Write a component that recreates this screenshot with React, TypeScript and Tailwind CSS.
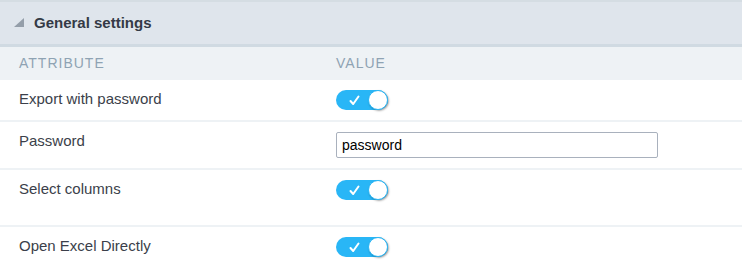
const rows = [
  { id: 1, label: 'Export with password', kind: 'toggle', h: 'h-[40px]' },
  { id: 2, label: 'Password', kind: 'input', h: 'h-[46px]' },
  { id: 3, label: 'Select columns', kind: 'toggle', h: 'h-[55px]' },
  { id: 4, label: 'Open Excel Directly', kind: 'toggle', h: 'h-[38px]' },
]

function Toggle() {
  return (
    <div className="relative w-[52px] h-[20px] rounded-full bg-[#29b6f6]">
      <svg className="absolute left-[13px] top-[5px]" width="11" height="11" viewBox="0 0 11 11">
        <path d="M1.5 6 L4.2 9 L9.5 1.5" fill="none" stroke="white" strokeWidth="2" strokeLinecap="round" strokeLinejoin="round" />
      </svg>
      <div className="absolute right-0 top-0 w-[20px] h-[20px] rounded-full bg-white border border-[#29b6f6] shadow-[1px_1px_2px_rgba(0,0,0,0.35)]" />
    </div>
  )
}

export default function App() {
  return (
    <div className="w-[742px] h-[265px] overflow-hidden bg-white font-['Liberation_Sans',Arial,sans-serif]">
      <div className="h-[47px] bg-[#dfe5ec] border-t-2 border-[#d5dde3] border-b-[3px] border-b-[#d0dae2] flex items-center pl-[14px]">
        <svg width="10" height="10" viewBox="0 0 10 10" className="mr-[10px]">
          <path d="M10 0 L10 9 L0 9 Z" fill="#949ea9" />
        </svg>
        <span className="text-[15px] font-bold text-[#343a46]">General settings</span>
      </div>
      <div className="h-[33px] bg-[#eef2f5] flex items-center text-[14px] tracking-[1px] text-[#8fa3b3]">
        <div className="w-[336px] pl-[19px]">ATTRIBUTE</div>
        <div>VALUE</div>
      </div>
      {rows.map((row, i) => (
        <div key={row.id}>
          <div className={`flex items-start pt-[10px] ${row.h}`}>
            <div className="w-[336px] pl-[19px] text-[15px] text-[#3b3f4a] leading-[18px]">
              {row.label}
            </div>
            {row.kind === 'toggle' ? (
              <Toggle />
            ) : (
              <input
                readOnly
                value="password"
                className="w-[322px] h-[26px] border border-[#a9b1bd] rounded-[2px] px-[5px] text-[14px] text-black outline-none"
              />
            )}
          </div>
          {i < rows.length - 1 && <div className="h-[2px] bg-[#eef2f5]" />}
        </div>
      ))}
    </div>
  )
}
